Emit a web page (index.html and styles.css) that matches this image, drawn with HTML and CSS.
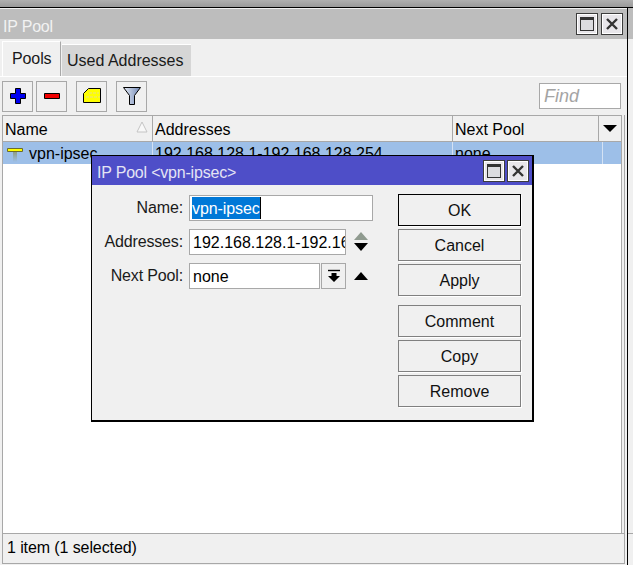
FILE: index.html
```html
<!DOCTYPE html>
<html>
<head>
<title>IP Pool</title>
<meta charset="utf-8" />
<link rel="stylesheet" href="styles.css">
</head>
<body>

<div class="strip"></div>
<div class="desk">
  <div class="win">
    <div class="titlebar">
      <span class="title">IP Pool</span>
      <span class="winbtn"><span class="maxi"></span></span>
      <span class="winbtn"><svg width="14" height="14" viewBox="0 0 14 14"><path d="M2 2L12 12M12 2L2 12" stroke="#333" stroke-width="2.4" fill="none"/></svg></span>
    </div>
    <div class="tabs">
      <div class="tab active">Pools</div>
      <div class="tab">Used Addresses</div>
    </div>
    <div class="toolbar">
      <div class="tool"><svg width="18" height="18" viewBox="0 0 18 18"><path d="M6.500 1.500h5v5h5v5h-5v5h-5v-5h-5v-5h5z" fill="#0000f0" stroke="#000"/></svg></div>
      <div class="tool"><svg width="18" height="18" viewBox="0 0 18 18"><path d="M1.500 6.500h15v5h-15z" fill="#f00000" stroke="#000"/></svg></div>
      <div class="tool gap"><svg width="18" height="16" viewBox="0 0 18 16"><path d="M5.500 0.500h12v14h-17v-9z" fill="#ffff00" stroke="#000"/><path d="M6 5h10M3 9h14" stroke="#e6e08a" stroke-dasharray="3 1" fill="none"/></svg></div>
      <div class="tool gap"><svg width="20" height="20" viewBox="0 0 20 20"><defs><linearGradient id="fun" x1="0" x2="1" y1="0" y2="0"><stop offset="0" stop-color="#e6ecf6"/><stop offset="1" stop-color="#6f86b4"/></linearGradient></defs><path d="M1.500 1.500h17l-6 8v9h-5v-9z" fill="url(#fun)" stroke="#000"/></svg></div>
      <div class="find">Find</div>
    </div>
    <div class="frame">
      <div class="table">
        <div class="cols head">
          <div class="cell name">Name<svg class="sort" width="12" height="12" viewBox="0 0 12 12"><path d="M6 1L11 11H1z" fill="#f8f8f8" stroke="#c4c4c4"/></svg></div>
          <div class="cell">Addresses</div>
          <div class="cell">Next Pool</div>
          <div class="cell more"><svg width="14" height="7" viewBox="0 0 14 7"><path d="M0 0h14L7 7z" fill="#000"/></svg></div>
        </div>
        <div class="cols row">
          <div class="cell"><svg class="pin" width="18" height="15" viewBox="0 0 18 15"><defs><linearGradient id="stem" x1="0" x2="0" y1="0" y2="1"><stop offset="0" stop-color="#8e9a78"/><stop offset="1" stop-color="#9dbfe8"/></linearGradient></defs><path d="M7 4h4v11H7z" fill="url(#stem)"/><path d="M1.500 1.500h15v3h-15z" fill="#ffff00" stroke="#6a6a30"/></svg>vpn-ipsec</div>
          <div class="cell">192.168.128.1-192.168.128.254</div>
          <div class="cell">none</div>
          <div class="cell"></div>
        </div>
        <div class="rows"></div>
      </div>
      <div class="status">1 item (1 selected)</div>
    </div>
  </div>
  <div class="side">
    <div class="side-title"></div>
    <div class="side-body"></div>
  </div>
</div>

<div class="dialog">
  <div class="titlebar dlg-title">
    <span class="title">IP Pool &lt;vpn-ipsec&gt;</span>
    <span class="winbtn"><span class="maxi"></span></span>
    <span class="winbtn"><svg width="14" height="14" viewBox="0 0 14 14"><path d="M2 2L12 12M12 2L2 12" stroke="#333" stroke-width="2.4" fill="none"/></svg></span>
  </div>
  <div class="dlg-body">
    <div class="form">
      <label>Name:</label>
      <div class="field wide"><span class="sel">vpn-ipsec</span></div>
      <label>Addresses:</label>
      <div class="combo">
        <div class="field addr">192.168.128.1-192.168.128.254</div>
        <svg class="arrows" width="16" height="22" viewBox="0 0 16 22"><path d="M8 1l7 8H1z" fill="#8f9a8f"/><path d="M1 12h14l-7 8z" fill="#000"/></svg>
      </div>
      <label>Next Pool:</label>
      <div class="combo">
        <div class="field pool">none</div>
        <div class="drop"><svg width="14" height="14" viewBox="0 0 14 14"><path d="M1 1.500h12" stroke="#000" stroke-width="1.400"/><path d="M4.500 4h5v3H13l-6 6-6-6h3.500z" fill="#000"/></svg></div>
        <svg class="arrows" width="16" height="10" viewBox="0 0 16 10"><path d="M8 1l7 8H1z" fill="#000"/></svg>
      </div>
    </div>
    <div class="actions">
      <div class="btn default">OK</div>
      <div class="btn">Cancel</div>
      <div class="btn">Apply</div>
      <div class="btn spaced">Comment</div>
      <div class="btn">Copy</div>
      <div class="btn">Remove</div>
    </div>
  </div>
</div>

</body>
</html>
```

FILE: styles.css
```css
html, body {
  margin:0;
  padding:0;
}

body {
  width:633px;
  height:565px;
  overflow:hidden;
  position:relative;
  background:#f0f0f0;
  font-family:"Liberation Sans", Arial, sans-serif;
  font-size:16px;
  color:#000;
}

.strip {
  height:7px;
  background:linear-gradient(#b0b0b0, #9a9a9a);
  border-bottom:1px solid #000;
}

.desk {
  display:flex;
  height:557px;
}

.win {
  width:627px;
  border-right:1px solid #000;
  display:flex;
  flex-direction:column;
  flex:none;
}

.titlebar {
  display:flex;
  align-items:center;
  gap:3px;
  height:30px;
  margin-top:1px;
  padding:0 4px 0 3px;
  background:#bdbdbd;
  flex:none;
}

.title {
  flex:1;
  margin-top:6px;
  color:#f2f2f2;
  letter-spacing:-0.2px;
}

.winbtn {
  width:20px;
  height:20px;
  border:1px solid #3c3c3c;
  box-shadow:inset 0 0 0 1px #fff;
  background:#e8e6ea;
  display:flex;
  align-items:center;
  justify-content:center;
}

.maxi {
  width:12px;
  height:10px;
  border:1px solid #333;
  border-top-width:3px;
  background:#dcdce0;
}

.tabs {
  display:flex;
  align-items:flex-end;
  height:37px;
  padding-left:2px;
  gap:1px;
  flex:none;
}

.tab {
  height:31px;
  padding:0 7px 0 5px;
  line-height:32px;
  background:#d6d6d6;
  border-top:1px solid #fff;
  color:#1a1a1a;
}

.tab.active {
  height:35px;
  line-height:33px;
  padding:0 9px;
  background:#f0f0f0;
  border-left:1px solid #fff;
  border-right:1px solid #a8a8a8;
  box-sizing:border-box;
  width:59px;
  letter-spacing:-0.1px;
}

.toolbar {
  display:flex;
  align-items:center;
  height:39px;
  flex:none;
  box-sizing:border-box;
  border-top:1px solid #fff;
  padding:0 6px 0 2px;
  gap:3px;
}

.tool {
  width:29px;
  height:29px;
  border:1px solid #a8a8a8;
  display:flex;
  align-items:center;
  justify-content:center;
}

.tool.gap {
  margin-left:6px;
}

.find {
  margin-left:auto;
  width:76px;
  height:24px;
  padding-left:4px;
  background:#fff;
  border:1px solid #a8a8a8;
  color:#a4a4a4;
  font-style:italic;
  font-size:18px;
  line-height:24px;
}

.frame {
  flex:1;
  display:flex;
  flex-direction:column;
  margin:0 2px 1px 2px;
  border-left:1px solid #a8a8a8;
  border-right:1px solid #a8a8a8;
  border-bottom:1px solid #a8a8a8;
}

.table {
  flex:1;
  display:flex;
  flex-direction:column;
  margin-right:2px;
  border-right:1px solid #a8a8a8;
}

.cols {
  display:grid;
  flex:none;
}

.head {
  grid-template-columns:150px 300px 146px 22px;
  height:25px;
  border-top:1px solid #a8a8a8;
  border-bottom:1px solid #a8a8a8;
}

.head .cell {
  border-right:1px solid #a8a8a8;
  line-height:28px;
}

.head .cell:last-child {
  border-right:0;
}

.cell {
  padding-left:2px;
  box-sizing:border-box;
  white-space:nowrap;
  overflow:hidden;
}

.name {
  position:relative;
}

.sort {
  position:absolute;
  right:4px;
  top:5px;
}

.more {
  display:flex;
  align-items:center;
  padding-left:4px;
}

.row {
  grid-template-columns:150px 300px 150px 18px;
  height:22px;
  line-height:23px;
  background:#9dbfe8;
}

.row .cell {
  border-right:1px solid #d4e2f4;
}

.row .cell:last-child {
  border-right:0;
}

.pin {
  vertical-align:-3px;
  margin:0 5px 0 1px;
}

.rows {
  flex:1;
  background:#fff;
}

.status {
  height:29px;
  line-height:27px;
  padding-left:4px;
  border-top:1px solid #a8a8a8;
  flex:none;
  letter-spacing:-0.1px;
}

.side {
  flex:1;
  display:flex;
  flex-direction:column;
}

.side-title {
  height:31px;
  background:#bdbdbd;
}

.side-body {
  height:494px;
  border-bottom:1px solid #a8a8a8;
}

.dialog {
  position:absolute;
  left:91px;
  top:155px;
  width:440px;
  height:264px;
  border:1px solid #000;
  border-right-width:2px;
  border-bottom-width:2px;
  background:#f0f0f0;
  display:flex;
  flex-direction:column;
}

.dlg-title {
  height:29px;
  margin:0;
  background:#4e4ec8;
  padding:0 3px 0 5px;
  gap:2px;
}

.dlg-title .title {
  color:#e4e4f4;
  margin-top:4px;
}

.dlg-body {
  display:flex;
  justify-content:space-between;
  padding:9px 11px 0 0;
}

.form {
  display:grid;
  grid-template-columns:91px 1fr;
  grid-auto-rows:26px;
  row-gap:8px;
  column-gap:6px;
  align-items:center;
  align-content:start;
  padding-top:1px;
}

.form label {
  text-align:right;
  color:#1a1a1a;
  letter-spacing:-0.15px;
}

.field {
  height:24px;
  line-height:26px;
  padding-left:3px;
  background:#fff;
  border:1px solid #a8a8a8;
  white-space:nowrap;
  overflow:hidden;
}

.wide {
  width:180px;
  padding-left:2px;
}

.sel {
  display:inline-block;
  background:#0078d7;
  color:#fff;
  height:22px;
  line-height:24px;
  margin-top:1px;
  vertical-align:top;
  border-right:1px solid #000;
  letter-spacing:-0.1px;
}

.combo {
  display:flex;
  align-items:center;
}

.addr {
  width:152px;
}

.pool {
  width:126px;
}

.drop {
  width:23px;
  height:24px;
  margin-left:1px;
  border:1px solid #a8a8a8;
  display:flex;
  align-items:center;
  justify-content:center;
}

.arrows {
  margin-left:7px;
}

.actions {
  display:flex;
  flex-direction:column;
  gap:3px;
}

.btn {
  width:121px;
  height:30px;
  line-height:31px;
  text-align:center;
  border:1px solid #808080;
  box-shadow:1px 1px 0 #fff;
  color:#111;
}

.btn.default {
  border-color:#000;
}

.btn.spaced {
  margin-top:6px;
}
```
